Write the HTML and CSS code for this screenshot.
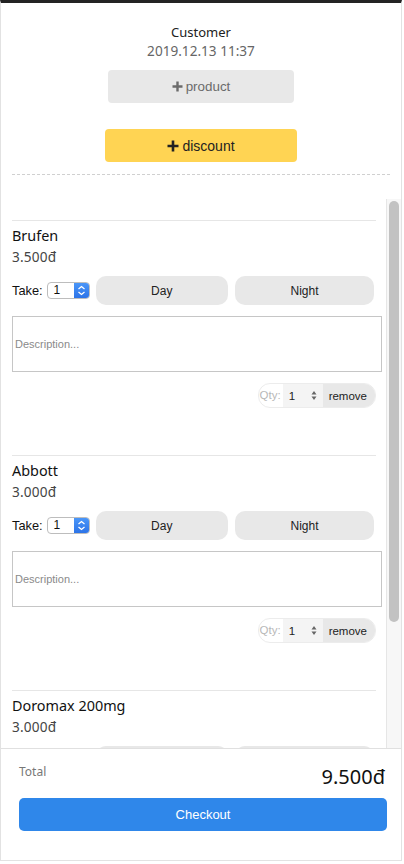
FILE: index.html
```html
<!DOCTYPE html>
<html>
<head>
<meta charset="utf-8">
<link rel="stylesheet" href="styles.css">
</head>
<body>
<div class="app">
  <header class="head">
    <div class="customer">Customer</div>
    <div class="date">2019.12.13 11:37</div>
    <button class="btn-product"><svg class="plus" width="11" height="11" viewBox="0 0 11 11"><path d="M5.5 0.5v10M0.5 5.5h10" stroke="currentColor" stroke-width="2.4"/></svg>product</button>
    <button class="btn-discount"><svg class="plus" width="12" height="12" viewBox="0 0 12 12"><path d="M6 0.5v11M0.5 6h11" stroke="currentColor" stroke-width="2.6"/></svg>discount</button>
    <div class="dash"></div>
  </header>

  <div class="list-wrap">
    <main class="list">
      <section class="item">
        <div class="name">Brufen</div>
        <div class="price">3.500đ</div>
        <div class="take">
          <span class="take-label">Take:</span>
          <span class="sel"><span class="sel-val">1</span><span class="sel-arrow"><svg width="9" height="11" viewBox="0 0 9 11"><path d="M1.5 4L4.5 1.5L7.5 4M1.5 7L4.5 9.5L7.5 7" fill="none" stroke="#fff" stroke-width="1.3"/></svg></span></span>
          <button class="pill">Day</button>
          <button class="pill">Night</button>
        </div>
        <textarea class="desc" placeholder="Description..."></textarea>
        <div class="qty-row">
          <div class="qty">
            <span class="qty-label">Qty:</span>
            <span class="qty-input"><span>1</span><svg width="6" height="11" viewBox="0 0 6 11"><path d="M3 1L5.5 4.5H0.5Z M3 10L5.5 6.5H0.5Z" fill="#666"/></svg></span>
            <button class="remove">remove</button>
          </div>
        </div>
      </section>

      <section class="item">
        <div class="name">Abbott</div>
        <div class="price">3.000đ</div>
        <div class="take">
          <span class="take-label">Take:</span>
          <span class="sel"><span class="sel-val">1</span><span class="sel-arrow"><svg width="9" height="11" viewBox="0 0 9 11"><path d="M1.5 4L4.5 1.5L7.5 4M1.5 7L4.5 9.5L7.5 7" fill="none" stroke="#fff" stroke-width="1.3"/></svg></span></span>
          <button class="pill">Day</button>
          <button class="pill">Night</button>
        </div>
        <textarea class="desc" placeholder="Description..."></textarea>
        <div class="qty-row">
          <div class="qty">
            <span class="qty-label">Qty:</span>
            <span class="qty-input"><span>1</span><svg width="6" height="11" viewBox="0 0 6 11"><path d="M3 1L5.5 4.5H0.5Z M3 10L5.5 6.5H0.5Z" fill="#666"/></svg></span>
            <button class="remove">remove</button>
          </div>
        </div>
      </section>

      <section class="item last">
        <div class="name">Doromax 200mg</div>
        <div class="price">3.000đ</div>
        <div class="take">
          <span class="take-label">Take:</span>
          <span class="sel"><span class="sel-val">1</span><span class="sel-arrow"><svg width="9" height="11" viewBox="0 0 9 11"><path d="M1.5 4L4.5 1.5L7.5 4M1.5 7L4.5 9.5L7.5 7" fill="none" stroke="#fff" stroke-width="1.3"/></svg></span></span>
          <button class="pill">Day</button>
          <button class="pill">Night</button>
        </div>
        <textarea class="desc" placeholder="Description..."></textarea>
        <div class="qty-row">
          <div class="qty">
            <span class="qty-label">Qty:</span>
            <span class="qty-input"><span>1</span><svg width="6" height="11" viewBox="0 0 6 11"><path d="M3 1L5.5 4.5H0.5Z M3 10L5.5 6.5H0.5Z" fill="#666"/></svg></span>
            <button class="remove">remove</button>
          </div>
        </div>
      </section>
    </main>
    <div class="scrollbar"><div class="thumb"></div></div>
  </div>

  <footer class="foot">
    <div class="total-row">
      <span class="total-label">Total</span>
      <span class="total-amount">9.500đ</span>
    </div>
    <button class="checkout">Checkout</button>
  </footer>
</div>
</body>
</html>
```

FILE: styles.css
```css
* { box-sizing: border-box; }
html, body { margin: 0; padding: 0; background: #fff; }
body { font-family: "Noto Sans", "Liberation Sans", sans-serif; }

.app {
  width: 402px;
  height: 861px;
  border: 1px solid #e2e2e2;
  border-top: 3px solid #232323;
  display: flex;
  flex-direction: column;
  overflow: hidden;
}

.head {
  padding: 20px 11px 0 11px;
  display: flex;
  flex-direction: column;
  align-items: center;
  flex: none;
}
.customer { font-size: 13px; line-height: 18px; color: #222; }
.date { font-size: 13.6px; line-height: 19px; color: #666; }

button {
  font-family: "Liberation Sans", Arial, sans-serif;
  border: none;
  margin: 0;
  cursor: pointer;
}
.btn-product, .btn-discount {
  height: 33px;
  border-radius: 4px;
  font-size: 13.4px;
  display: flex;
  align-items: center;
  justify-content: center;
  gap: 3px;
}
.btn-product {
  margin-top: 10px;
  width: 186px;
  background: #e8e8e8;
  color: #6b6b6b;
}
.btn-discount {
  margin-top: 26px;
  width: 192px;
  background: #ffd453;
  color: #222;
  font-size: 14px;
}
.plus { display: block; }
.dash {
  margin-top: 12px;
  align-self: stretch;
  border-top: 1px dashed #d0d0d0;
}

.list-wrap {
  margin-top: 24px;
  flex: 1 1 0;
  min-height: 0;
  display: flex;
}
.list {
  flex: 1 1 0;
  min-width: 0;
  overflow: hidden;
  padding-top: 21px;
}
.scrollbar {
  flex: none;
  width: 15px;
  background: #f7f7f7;
  border-left: 1px solid #e6e6e6;
  padding: 2px 2px 0 2px;
}
.thumb {
  height: 421px;
  background: #c2c2c2;
  border-radius: 5px;
}

.item {
  margin: 0 10px 0 11px;
  border-top: 1px solid #e6e6e6;
  padding: 6px 0 47px 0;
}
.item.last { padding-bottom: 28px; }
.name { font-size: 14.4px; line-height: 18px; color: #111; }
.price { margin-top: 3px; font-size: 13.6px; line-height: 18px; color: #444; letter-spacing: 0.2px; }

.take {
  margin-top: 10px;
  margin-right: 2px;
  height: 29px;
  display: flex;
  align-items: center;
}
.take-label {
  font-family: "Liberation Sans", Arial, sans-serif;
  font-size: 12.8px;
  color: #111;
  margin-right: 4px;
}
.sel {
  display: flex;
  height: 17px;
  width: 43px;
  border: 1px solid #bdbdbd;
  border-radius: 4px;
  overflow: hidden;
  background: #fff;
}
.sel-val {
  flex: 1;
  font-family: "Liberation Sans", Arial, sans-serif;
  font-size: 12px;
  line-height: 15px;
  padding-left: 6px;
  color: #111;
}
.sel-arrow {
  width: 15px;
  background: linear-gradient(#4a96f8, #2d74e8);
  display: flex;
  align-items: center;
  justify-content: center;
}
.pill {
  flex: 1 1 auto;
  height: 29px;
  border-radius: 10px;
  background: #e8e8e8;
  color: #222;
  font-size: 12px;
  margin-left: 6px;
}
.pill + .pill { margin-left: 7px; }

.desc {
  display: block;
  margin: 11px 0 0 0;
  width: 100%;
  box-sizing: content-box;
  height: 14px;
  padding: 20px 2px;
  border: 1px solid #c6c6c6;
  border-radius: 0;
  font-family: "Liberation Sans", Arial, sans-serif;
  font-size: 11px;
  line-height: 14px;
  resize: none;
  outline: none;
}
.desc::placeholder { color: #8a8a8a; }

.qty-row {
  margin-top: 11px;
  display: flex;
  justify-content: flex-end;
}
.qty {
  display: flex;
  height: 25px;
  border: 1px solid #ececec;
  border-radius: 12px;
  overflow: hidden;
  font-family: "Liberation Sans", Arial, sans-serif;
  font-size: 11.5px;
}
.qty-label {
  color: #b8b8b8;
  padding: 0 2px 0 1px;
  line-height: 23px;
}
.qty-input {
  width: 40px;
  background: #f4f4f4;
  display: flex;
  align-items: center;
  justify-content: space-between;
  padding: 0 6px 0 6px;
  color: #222;
}
.remove {
  background: #e8e8e8;
  color: #222;
  font-size: 11.5px;
  padding: 0 8px 0 6px;
  height: 23px;
  border-radius: 0;
}

.foot {
  flex: none;
  height: 112px;
  border-top: 1px solid #e0e0e0;
  padding: 15px 14px 0 18px;
}
.total-row {
  display: flex;
  justify-content: space-between;
  align-items: flex-start;
  height: 25px;
}
.total-label { font-size: 12px; line-height: 16px; color: #777; }
.total-amount { font-size: 20px; line-height: 24px; color: #111; margin-right: 2px; margin-top: 1px; }
.checkout {
  margin-top: 9px;
  width: 100%;
  height: 33px;
  border-radius: 5px;
  background: #2f87ea;
  color: #fff;
  font-size: 13px;
  display: block;
}
```
